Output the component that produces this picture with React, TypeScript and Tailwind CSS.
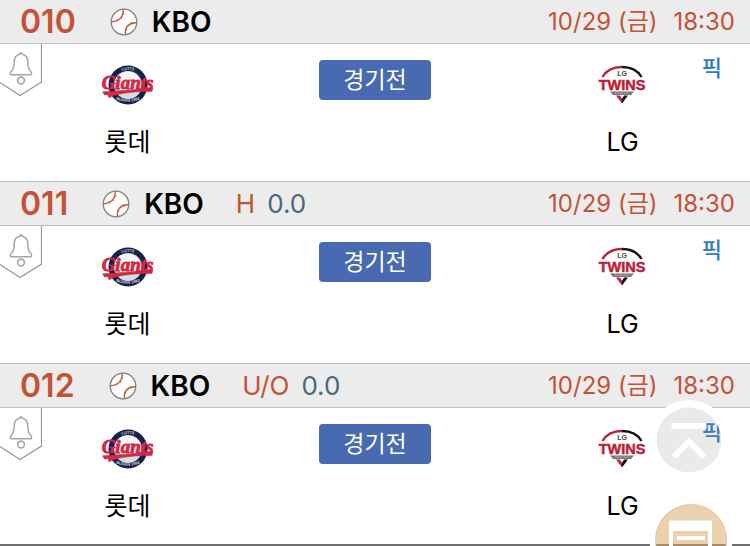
type Game = {
  id: string;
  market?: string;
  line?: string;
};

const games: Game[] = [
  { id: "010" },
  { id: "011", market: "H", line: "0.0" },
  { id: "012", market: "U/O", line: "0.0" },
];

function Baseball() {
  return (
    <svg viewBox="0 0 28 28" className="size-7 shrink-0" fill="none" aria-hidden="true">
      <circle cx="14" cy="14" r="12.8" fill="#fff" stroke="#808080" strokeWidth="1.3" />
      <g stroke="#cb5436">
        <path d="M13.2 1.8C13.8 8 9.5 13.2 1.8 13.8" strokeWidth="1.4" />
        <path d="M26.2 14.8C19 14.5 14.8 19 15.4 26" strokeWidth="1.4" />
        <path d="M11.8 5.8l2.4.4M10 9.2l2 1.5M7 11.3l1 2.3" strokeWidth=".9" />
        <path d="M21.6 14.4l.6 2.2M17.8 16.8l1.6 1.5M15 20.6l2.3.7" strokeWidth=".9" />
      </g>
    </svg>
  );
}

function AlarmTag() {
  return (
    <svg viewBox="0 0 42 53" className="h-[53px] w-[42px]" fill="none" stroke="#a6a6a6" aria-hidden="true">
      <path d="M41.5 0V38L20 51.5L0 38.5" strokeWidth="1.2" stroke="#999" />
      <path
        d="M21 8.7c-.9 0-1.3.6-1.3 1.6-3.8.8-5.5 4-5.5 7.7 0 5-.6 7.4-3 9.5-.9.8-1.2 3.3.1 3.3h19.4c1.3 0 1-2.5.1-3.3-2.4-2.1-3-4.5-3-9.5 0-3.7-1.7-6.9-5.5-7.7 0-1-.4-1.6-1.3-1.6Z"
        strokeWidth="1.5"
      />
      <circle cx="21" cy="36.5" r="3.4" strokeWidth="1.6" />
    </svg>
  );
}

function GiantsLogo() {
  return (
    <svg viewBox="0 0 54 40" className="h-10 w-[54px]" role="img" aria-label="Lotte Giants">
      <defs>
        <path id="giants-top" d="M17 6.2Q27 3.8 37 6.2" />
        <path id="giants-bottom" d="M13 33.8Q27 39.5 41 33.8" />
      </defs>
      <circle cx="27" cy="20" r="19.5" fill="#14214a" />
      <circle cx="27" cy="20" r="14" fill="#dcdcdf" />
      <ellipse cx="26.5" cy="16.5" rx="12" ry="10" fill="#f6f6f7" />
      <text fontSize="4" fill="#d5d9e5" fontWeight="700" textAnchor="middle" className="font-['Liberation_Sans']">
        <textPath href="#giants-top" startOffset="50%">LOTTE</textPath>
      </text>
      <text fontSize="4" fill="#d5d9e5" fontWeight="700" textAnchor="middle" className="font-['Liberation_Sans']">
        <textPath href="#giants-bottom" startOffset="50%">BUSAN 1982</textPath>
      </text>
      <path d="M1.5 26.8Q26 26 52 22.5L51 26.5Q33 26.5 20 28.8Q11 30.5 8 33L7 29.8L3.5 30Z" fill="#e1243d" stroke="#6a3458" strokeWidth=".4" />
      <text
        x="26.5"
        y="24"
        fontSize="19"
        fontWeight="700"
        fontStyle="italic"
        textAnchor="middle"
        fill="#e1243d"
        stroke="#a82a4c"
        strokeWidth=".8"
        paintOrder="stroke"
        className="font-['Liberation_Serif']"
      >
        Giants
      </text>
    </svg>
  );
}

function TwinsLogo() {
  return (
    <svg viewBox="0 0 50 40" className="h-10 w-[50px]" role="img" aria-label="LG Twins">
      <path d="M4.5 12C8.5 5 15.5 2 24 2" fill="none" stroke="#be1e37" strokeWidth="2.4" />
      <path d="M24 2C32.5 2 39.5 5 43.5 12" fill="none" stroke="#111" strokeWidth="2.4" />
      <text x="24" y="11" fontSize="7" textAnchor="middle" fill="#444" fontWeight="600" className="font-['Liberation_Sans']">
        LG
      </text>
      <text
        x="24"
        y="25"
        fontSize="14.5"
        fontWeight="900"
        textAnchor="middle"
        fill="#be1e37"
        stroke="#be1e37"
        strokeWidth=".5"
        className="font-['Liberation_Sans']"
      >
        TWINS
      </text>
      <path d="M12 26.5H36L33 30H15Z" fill="#77777a" />
      <path d="M17 28.2H31" stroke="#bbb" strokeWidth="1" strokeDasharray="1.5 .7" />
      <path d="M18 30.6H21.8L24 33.5V38.5Z" fill="#be1e37" />
      <path d="M30 30.6H26.2L24 33.5V38.5Z" fill="#111" />
    </svg>
  );
}

function GameRow({ id, market, line }: Game) {
  return (
    <article className="group border-t border-[#bdbdbd] first:border-t-0">
      <header className="flex h-11 items-center border-b border-[#bdbdbd] bg-[#ececec] pr-[15px] pl-5 text-[#c65235]">
        <span className="text-[32px] leading-8 font-semibold">{id}</span>
        <span className="ml-[34px] flex items-center gap-3.5 text-[28px] leading-8 font-semibold text-black">
          <Baseball />
          KBO
        </span>
        {market && (
          <span className="ml-8 flex gap-3 text-[26px] leading-8">
            <span>{market}</span>
            <span className="text-[#48697d]">{line}</span>
          </span>
        )}
        <time className="ml-auto flex gap-4 text-[24px] leading-8">
          <span>10/29 (금)</span>
          <span>18:30</span>
        </time>
      </header>
      <div className="relative grid grid-cols-[34%_1fr_34%] pb-[23px] group-last-of-type:pb-[22px]">
        <button type="button" aria-label="알림" className="absolute top-0 left-0">
          <AlarmTag />
        </button>
        <div className="flex flex-col items-center gap-[21px] pt-[21px]">
          <GiantsLogo />
          <span className="text-[25px] leading-8 text-black">롯데</span>
        </div>
        <div className="flex justify-center pt-4">
          <button type="button" className="h-10 w-28 rounded bg-[#486ab0] text-[23px] leading-10 text-white">
            경기전
          </button>
        </div>
        <div className="flex flex-col items-center gap-[21px] pt-[21px]">
          <TwinsLogo />
          <span className="text-[25px] leading-8 text-black">LG</span>
        </div>
        <a href="#pick" className="absolute top-2 right-7 text-[22px] leading-8 font-medium text-[#3079c6]">
          픽
        </a>
      </div>
    </article>
  );
}

export default function App() {
  return (
    <main className="relative overflow-hidden border-b-2 border-[#6e6e70] bg-white font-['Inter','Noto_Sans_CJK_KR',sans-serif]">
      {games.map((game) => (
        <GameRow key={game.id} {...game} />
      ))}
      <button
        type="button"
        aria-label="맨 위로"
        className="fixed right-[21px] bottom-[66px] size-20 rounded-full"
      >
        <svg viewBox="0 0 80 80" className="size-20" fill="none" aria-hidden="true">
          <circle cx="40" cy="40" r="36" stroke="#fff" strokeWidth="8" />
          <circle cx="40" cy="40" r="32.5" fill="#808080" fillOpacity=".17" />
          <path d="M22.5 26H57.5M24.5 57L40 41.5L55.5 57" stroke="#fff" strokeWidth="6" />
        </svg>
      </button>
      <button
        type="button"
        aria-label="메뉴"
        className="fixed right-[17px] bottom-[-36px] size-[84px] rounded-full"
      >
        <svg viewBox="0 0 84 84" className="size-[84px]" fill="none" aria-hidden="true">
          <circle cx="42" cy="42" r="38.5" stroke="#fff" strokeWidth="6" />
          <circle cx="42" cy="42" r="36" fill="#dba866" fillOpacity=".53" />
          <circle cx="42" cy="42" r="35.5" stroke="#e5bd8c" strokeOpacity=".5" />
          <path d="M20 22.5H63V62H20ZM24 33V62H59V33Z" fill="#fff" fillRule="evenodd" />
          <path d="M28 38H56V42H28Z" fill="#fff" />
        </svg>
      </button>
    </main>
  );
}
